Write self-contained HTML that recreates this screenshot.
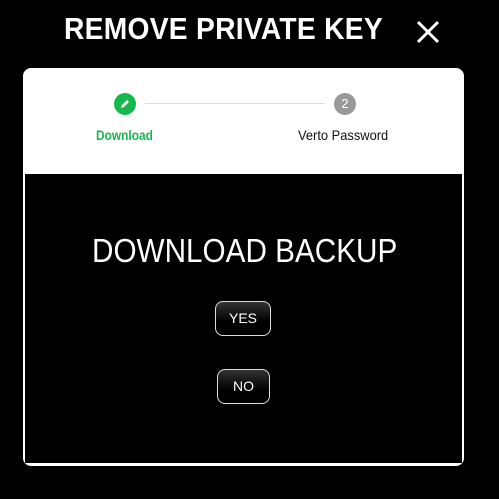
<!DOCTYPE html>
<html><head><style>
body{margin:0;width:499px;height:499px;background:#000;position:relative;overflow:hidden;font-family:"Liberation Sans",sans-serif;}
.t{position:absolute;left:64px;top:11px;color:#fff;font-weight:bold;font-size:31px;white-space:nowrap;transform:scaleX(0.91);transform-origin:left;letter-spacing:0.3px}
.card{position:absolute;left:23px;top:68px;width:441px;height:398px;background:#fff;border-radius:8px;}
.blk{position:absolute;left:2px;top:106px;width:437px;height:289px;background:#000;}
.c{position:absolute;width:22px;height:22px;border-radius:50%;}
.line{position:absolute;left:145px;top:103px;width:180px;height:1px;background:#ddd}
.lab{position:absolute;top:127px;font-size:14px;transform:scaleX(0.92);transform-origin:left;white-space:nowrap}
.h{position:absolute;left:92px;top:232px;color:#fff;font-size:33px;white-space:nowrap;transform:scaleX(0.9);transform-origin:left}
.b{position:absolute;border:1px solid #ddd;border-radius:8px;background:linear-gradient(#333,#000 60%);color:#fff;font-size:14px;text-align:center;box-sizing:border-box}
</style></head><body>
<div class="t">REMOVE PRIVATE KEY</div>
<svg style="position:absolute;left:416px;top:20px" width="24" height="24"><path d="M2 2L22 22M22 2L2 22" stroke="#fff" stroke-width="3"/></svg>
<div class="card"><div class="blk"></div></div>
<div class="line"></div>
<div class="c" style="left:114px;top:93px;background:#16b84e"><svg width="22" height="22"><path d="M7 15L8 12L13 7L15 9L10 14Z" fill="#fff"/></svg></div>
<div class="c" style="left:334px;top:93px;background:#999;color:#fff;font-size:13px;text-align:center;line-height:22px">2</div>
<div class="lab" style="left:96px;color:#16b84e;font-weight:bold;transform:scaleX(0.85)">Download</div>
<div class="lab" style="left:298px;color:#111">Verto Password</div>
<div class="h">DOWNLOAD BACKUP</div>
<div class="b" style="left:215px;top:301px;width:56px;height:35px;line-height:33px">YES</div>
<div class="b" style="left:217px;top:369px;width:53px;height:35px;line-height:33px">NO</div>
</body></html>
